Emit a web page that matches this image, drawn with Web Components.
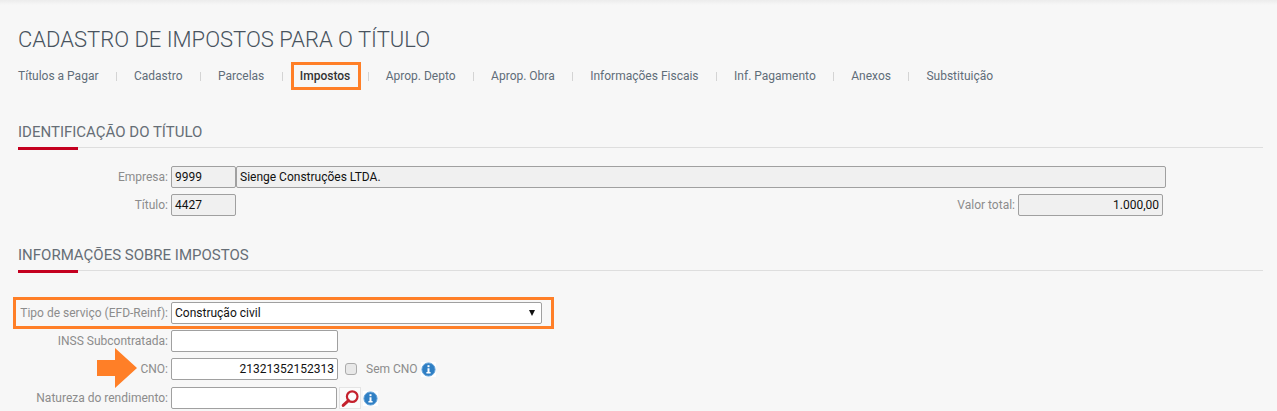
<!DOCTYPE html>
<html lang="pt-BR">
<head>
<meta charset="utf-8">
<title>Cadastro de impostos</title>
<style>
    html, body{ margin: 0; background: #f7f7f7; }
    body{ font-family: Roboto, "Liberation Sans", sans-serif; overflow: hidden; height: 411px; }
</style>
</head>
<body>
<tax-page>
    <page-title>CADASTRO DE IMPOSTOS PARA O TÍTULO</page-title>
    <tab-bar>
        <tab-item>Títulos a Pagar</tab-item>
        <tab-item>Cadastro</tab-item>
        <tab-item>Parcelas</tab-item>
        <tab-item active>Impostos</tab-item>
        <tab-item>Aprop. Depto</tab-item>
        <tab-item>Aprop. Obra</tab-item>
        <tab-item>Informações Fiscais</tab-item>
        <tab-item>Inf. Pagamento</tab-item>
        <tab-item>Anexos</tab-item>
        <tab-item last>Substituição</tab-item>
    </tab-bar>

    <section-head style="margin-top:33px">IDENTIFICAÇÃO DO TÍTULO</section-head>
    <form-row style="margin-top:18px" label="Empresa:">
        <field-box readonly style="width:65px">9999</field-box>
        <field-box readonly style="width:930px;margin-left:0">Sienge Construções LTDA.</field-box>
    </form-row>
    <form-row style="margin-top:6px" label="Título:">
        <field-box readonly style="width:65px">4427</field-box>
        <side-value label="Valor total:">1.000,00</side-value>
    </form-row>

    <section-head style="margin-top:29px">INFORMAÇÕES SOBRE IMPOSTOS</section-head>
    <form-row style="margin-top:31px" label="Tipo de serviço (EFD-Reinf):" highlight>
        <select-box>Construção civil</select-box>
    </form-row>
    <form-row style="margin-top:6px" label="INSS Subcontratada:">
        <field-box style="width:167px"></field-box>
    </form-row>
    <form-row style="margin-top:6px" label="CNO:" arrow>
        <field-box align="right" style="width:167px">21321352152313</field-box>
        <check-label>Sem CNO</check-label>
        <info-icon style="margin-left:3px"></info-icon>
    </form-row>
    <form-row style="margin-top:7px" label="Natureza do rendimento:">
        <field-box style="width:166px"></field-box>
        <search-button></search-button>
        <info-icon style="margin-left:2px"></info-icon>
    </form-row>
</tax-page>

<script>
const templateTaxPage = document.createElement("template");
templateTaxPage.innerHTML = `
    <style>
        :host{
            display: block;
            box-sizing: border-box;
            height: 411px;
            padding: 0 14px 0 18px;
            background: linear-gradient(#ececec, #f7f7f7 5px);
            color: #5b6670;
        }
    </style>
    <slot></slot>
`;
class TaxPage extends HTMLElement{
    constructor(){
        super();
        this.attachShadow({mode: "open"});
        this.shadowRoot.appendChild(templateTaxPage.content.cloneNode(true));
    };
};
customElements.define("tax-page", TaxPage);

const templatePageTitle = document.createElement("template");
templatePageTitle.innerHTML = `
    <style>
        :host{
            display: block;
            padding-top: 26px;
            font-size: 22px;
            line-height: 28px;
            font-weight: 300;
            color: #48535e;
            white-space: nowrap;
        }
    </style>
    <slot></slot>
`;
class PageTitle extends HTMLElement{
    constructor(){
        super();
        this.attachShadow({mode: "open"});
        this.shadowRoot.appendChild(templatePageTitle.content.cloneNode(true));
    };
};
customElements.define("page-title", PageTitle);

const templateTabBar = document.createElement("template");
templateTabBar.innerHTML = `
    <style>
        :host{
            display: flex;
            margin-top: 9px;
            height: 26px;
            align-items: center;
        }
    </style>
    <slot></slot>
`;
class TabBar extends HTMLElement{
    constructor(){
        super();
        this.attachShadow({mode: "open"});
        this.shadowRoot.appendChild(templateTabBar.content.cloneNode(true));
    };
};
customElements.define("tab-bar", TabBar);

const templateTabItem = document.createElement("template");
templateTabItem.innerHTML = `
    <style>
        :host{
            display: flex;
            align-items: center;
            position: relative;
            font-size: 12px;
            line-height: 16px;
            color: #5f6d79;
            white-space: nowrap;
        }
        .sep{
            width: 1px;
            height: 9px;
            margin: 0 17px 0 17.5px;
            background: #d4d4d4;
        }
        :host([last]) .sep{ display: none; }
        :host([active]){ color: #333; font-weight: 500; }
        .mark{
            display: none;
            position: absolute;
            left: -9px;
            top: -6px;
            width: 64px;
            height: 22px;
            border: 3px solid #ff7f27;
        }
        :host([active]) .mark{ display: block; }
    </style>
    <slot></slot>
    <span class="sep"></span>
    <span class="mark"></span>
`;
class TabItem extends HTMLElement{
    constructor(){
        super();
        this.attachShadow({mode: "open"});
        this.shadowRoot.appendChild(templateTabItem.content.cloneNode(true));
    };
};
customElements.define("tab-item", TabItem);

const templateSectionHead = document.createElement("template");
templateSectionHead.innerHTML = `
    <style>
        :host{
            display: block;
            position: relative;
            height: 26px;
            font-size: 15px;
            line-height: 20px;
            color: #666e76;
            border-bottom: 1px solid #dedede;
            box-sizing: border-box;
        }
        .red{
            position: absolute;
            left: 0;
            bottom: -3px;
            width: 60px;
            height: 3px;
            background: #c4001f;
        }
    </style>
    <slot></slot>
    <span class="red"></span>
`;
class SectionHead extends HTMLElement{
    constructor(){
        super();
        this.attachShadow({mode: "open"});
        this.shadowRoot.appendChild(templateSectionHead.content.cloneNode(true));
    };
};
customElements.define("section-head", SectionHead);

const templateFormRow = document.createElement("template");
templateFormRow.innerHTML = `
    <style>
        :host{
            display: flex;
            align-items: center;
            position: relative;
            height: 22px;
            font-size: 12px;
        }
        .label{
            width: 150px;
            margin-right: 3px;
            text-align: right;
            white-space: nowrap;
            color: #8c8c8c;
        }
        .mark, .arrow{ display: none; position: absolute; }
        :host([highlight]) .mark{
            display: block;
            left: -5px;
            top: -5px;
            width: 535px;
            height: 26px;
            border: 3px solid #ff7f27;
        }
        :host([arrow]) .arrow{
            display: block;
            left: 79px;
            top: -10px;
        }
    </style>
    <span class="label"></span>
    <slot></slot>
    <span class="mark"></span>
    <svg class="arrow" width="40" height="40" viewBox="0 0 40 40"><path d="M0 12H18V0L40 20 18 40V28H0Z" fill="#ff7f27"/></svg>
`;
class FormRow extends HTMLElement{
    constructor(){
        super();
        this.attachShadow({mode: "open"});
        this.shadowRoot.appendChild(templateFormRow.content.cloneNode(true));
        this.shadowRoot.querySelector(".label").textContent = this.getAttribute("label");
    };
};
customElements.define("form-row", FormRow);

const templateFieldBox = document.createElement("template");
templateFieldBox.innerHTML = `
    <style>
        :host{
            display: block;
            box-sizing: border-box;
            height: 22px;
            padding: 0 3px;
            border: 1px solid #a0a0a0;
            border-radius: 2px;
            background: #fff;
            color: #111;
            font-size: 12px;
            line-height: 20px;
            white-space: nowrap;
            overflow: hidden;
            flex: none;
        }
        :host([readonly]){ background: #f0f0f0; }
        :host([align="right"]){ text-align: right; }
    </style>
    <slot></slot>
`;
class FieldBox extends HTMLElement{
    constructor(){
        super();
        this.attachShadow({mode: "open"});
        this.shadowRoot.appendChild(templateFieldBox.content.cloneNode(true));
    };
};
customElements.define("field-box", FieldBox);

const templateSideValue = document.createElement("template");
templateSideValue.innerHTML = `
    <style>
        :host{
            display: flex;
            align-items: center;
            margin-left: auto;
            margin-right: 100px;
            font-size: 12px;
            color: #8c8c8c;
            white-space: nowrap;
        }
        field-box{ width: 145px; margin-left: 3px; }
    </style>
    <span id="label"></span>
    <field-box readonly align="right"><slot></slot></field-box>
`;
class SideValue extends HTMLElement{
    constructor(){
        super();
        this.attachShadow({mode: "open"});
        this.shadowRoot.appendChild(templateSideValue.content.cloneNode(true));
        this.shadowRoot.getElementById("label").textContent = this.getAttribute("label");
    };
};
customElements.define("side-value", SideValue);

const templateSelectBox = document.createElement("template");
templateSelectBox.innerHTML = `
    <style>
        :host{
            display: flex;
            align-items: center;
            justify-content: space-between;
            box-sizing: border-box;
            width: 371px;
            height: 22px;
            padding: 0 6px 0 3px;
            border: 1px solid #a0a0a0;
            border-radius: 2px;
            background: #fff;
            color: #111;
            font-size: 12px;
            white-space: nowrap;
        }
        .arrow{
            width: 0;
            height: 0;
            border-left: 3.5px solid transparent;
            border-right: 3.5px solid transparent;
            border-top: 6px solid #111;
        }
    </style>
    <span><slot></slot></span>
    <span class="arrow"></span>
`;
class SelectBox extends HTMLElement{
    constructor(){
        super();
        this.attachShadow({mode: "open"});
        this.shadowRoot.appendChild(templateSelectBox.content.cloneNode(true));
    };
};
customElements.define("select-box", SelectBox);

const templateCheckLabel = document.createElement("template");
templateCheckLabel.innerHTML = `
    <style>
        :host{
            display: flex;
            align-items: center;
            margin-left: 7px;
            font-size: 12px;
            color: #8c8c8c;
            white-space: nowrap;
        }
        .box{
            box-sizing: border-box;
            width: 12px;
            height: 12px;
            margin-right: 9px;
            border: 1px solid #ababab;
            border-radius: 3px;
            background: #e8e8e8;
        }
    </style>
    <span class="box"></span>
    <slot></slot>
`;
class CheckLabel extends HTMLElement{
    constructor(){
        super();
        this.attachShadow({mode: "open"});
        this.shadowRoot.appendChild(templateCheckLabel.content.cloneNode(true));
    };
};
customElements.define("check-label", CheckLabel);

const templateInfoIcon = document.createElement("template");
templateInfoIcon.innerHTML = `
    <style>
        :host{ display: block; width: 15px; height: 15px; background: #fff; flex: none; }
        svg{ display: block; }
    </style>
    <svg width="15" height="15" viewBox="0 0 15 15">
        <circle cx="7.5" cy="7.5" r="6.6" fill="#2f7fc4" stroke="#6aa6da" stroke-width="1"/>
        <rect x="6.5" y="3.2" width="2" height="2" fill="#fff"/>
        <path d="M6.5 6.2H8.5V10H9.6V11.6H5.4V10H6.5Z" fill="#fff"/>
    </svg>
`;
class InfoIcon extends HTMLElement{
    constructor(){
        super();
        this.attachShadow({mode: "open"});
        this.shadowRoot.appendChild(templateInfoIcon.content.cloneNode(true));
    };
};
customElements.define("info-icon", InfoIcon);

const templateSearchButton = document.createElement("template");
templateSearchButton.innerHTML = `
    <style>
        :host{
            display: block;
            box-sizing: border-box;
            width: 22px;
            height: 22px;
            margin-left: 2px;
            border: 1px solid #e4e4e4;
            background: #fbfbfb;
            flex: none;
        }
        svg{ display: block; }
    </style>
    <svg width="20" height="20" viewBox="0 0 20 20">
        <circle cx="12.2" cy="8.6" r="5.3" fill="none" stroke="#c4202c" stroke-width="2.2"/>
        <path d="M8.4 12.6L3.2 17.4" fill="none" stroke="#c4202c" stroke-width="3" stroke-linecap="round"/>
    </svg>
`;
class SearchButton extends HTMLElement{
    constructor(){
        super();
        this.attachShadow({mode: "open"});
        this.shadowRoot.appendChild(templateSearchButton.content.cloneNode(true));
    };
};
customElements.define("search-button", SearchButton);
</script>
</body>
</html>
